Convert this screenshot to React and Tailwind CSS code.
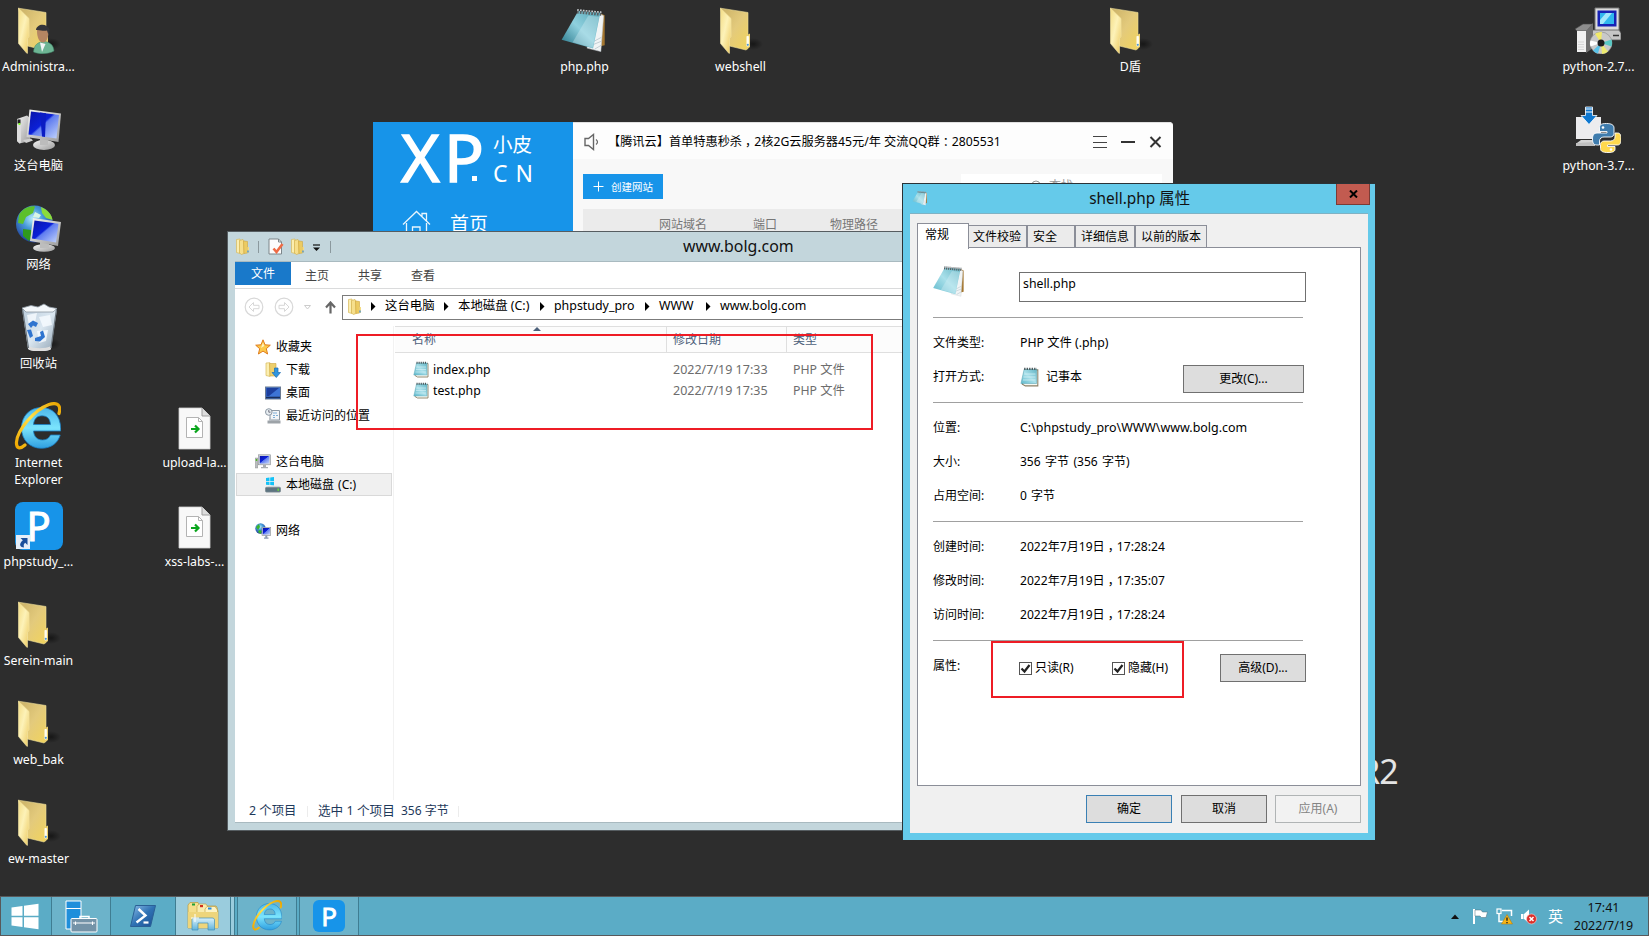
import React from "react";

const Svg = ({ w, h, box, fit, className = "", children }) => (
  <svg width={w} height={h} viewBox={box || `0 0 ${w} ${h}`} preserveAspectRatio={fit} className={`block shrink-0 ${className}`} fill="none">
    {children}
  </svg>
);

const Defs = () => (
  <svg width="0" height="0" className="absolute">
    <defs>
      <linearGradient id="fFront" x1="0" y1="0" x2="1" y2="1">
        <stop offset="0" stopColor="#f3dc84" />
        <stop offset=".45" stopColor="#fdf2b8" />
        <stop offset="1" stopColor="#ecc95f" />
      </linearGradient>
      <linearGradient id="fBack" x1="0" y1="0" x2="1" y2="1">
        <stop offset="0" stopColor="#c9b066" />
        <stop offset=".5" stopColor="#e3ca7c" />
        <stop offset="1" stopColor="#f2d45c" />
      </linearGradient>
      <linearGradient id="scr" x1="0" y1="0" x2="1" y2="1">
        <stop offset="0" stopColor="#0a14a8" />
        <stop offset=".45" stopColor="#0b20d8" />
        <stop offset=".5" stopColor="#5f7cf0" />
        <stop offset="1" stopColor="#c5d6fb" />
      </linearGradient>
      <linearGradient id="metal" x1="0" y1="0" x2="1" y2="1">
        <stop offset="0" stopColor="#f6f6f6" />
        <stop offset="1" stopColor="#9a9a9a" />
      </linearGradient>
      <radialGradient id="globe" cx=".45" cy=".35" r=".7">
        <stop offset="0" stopColor="#b6ecfb" />
        <stop offset=".4" stopColor="#4699d8" />
        <stop offset="1" stopColor="#1a2f8e" />
      </radialGradient>
      <linearGradient id="ieBlue" x1="0" y1="0" x2="0" y2="1">
        <stop offset="0" stopColor="#4db7ea" />
        <stop offset=".5" stopColor="#7be4fd" />
        <stop offset="1" stopColor="#2f9fe0" />
      </linearGradient>
      <linearGradient id="ieGold" x1="0" y1="1" x2="1" y2="0">
        <stop offset="0" stopColor="#f0a800" />
        <stop offset=".5" stopColor="#ffe14a" />
        <stop offset="1" stopColor="#e9a400" />
      </linearGradient>
      <linearGradient id="note" x1="0" y1="1" x2="1" y2="0">
        <stop offset="0" stopColor="#1f7083" />
        <stop offset=".5" stopColor="#8fd0de" />
        <stop offset="1" stopColor="#55a5b5" />
      </linearGradient>
      <linearGradient id="noteLight" x1="0" y1="1" x2="1" y2="0">
        <stop offset="0" stopColor="#5fb8cb" />
        <stop offset=".5" stopColor="#a9e0ea" />
        <stop offset="1" stopColor="#62b3c3" />
      </linearGradient>
      <linearGradient id="bin" x1="0" y1="0" x2="1" y2="1">
        <stop offset="0" stopColor="#b9cbda" />
        <stop offset=".5" stopColor="#dbe7f1" />
        <stop offset="1" stopColor="#8fa2b2" />
      </linearGradient>
      <linearGradient id="ps" x1="0" y1="0" x2="1" y2="1">
        <stop offset="0" stopColor="#8fc0ea" />
        <stop offset=".5" stopColor="#2f72b4" />
        <stop offset="1" stopColor="#1b4f93" />
      </linearGradient>
      <linearGradient id="glass" x1="0" y1="0" x2="0" y2="1">
        <stop offset="0" stopColor="#d9f1fa" />
        <stop offset="1" stopColor="#5fb3dc" />
      </linearGradient>
      <radialGradient id="shade">
        <stop offset="0" stopColor="#000" stopOpacity=".5" />
        <stop offset="1" stopColor="#000" stopOpacity="0" />
      </radialGradient>
    </defs>
  </svg>
);

const FolderShape = ({ tab = true }) => (
  <>
    <ellipse cx="38" cy="38" rx="10" ry="6" fill="url(#shade)" />
    <path d="M5.500 2.200 33 6.500V42.500L31 44 14.500 40Z" fill="url(#fBack)" stroke="#efdf9a" strokeWidth=".6" />
    <path d="M33 28.500 35 27.500V41L33 42.500H31.500V29.500Z" fill="#eacf6e" />
    {tab && (
      <>
        <rect x="31.500" y="30" width="2.400" height="10.500" rx=".8" fill="#fffdf0" />
        <circle cx="32.800" cy="38.800" r="1.100" fill="#4d9ad8" />
      </>
    )}
    <path d="M5.500 2.200 16 12.500V30.500L14.500 32.500V47.300L13.800 47.300 5.500 37.500Z" fill="url(#fFront)" stroke="#f5e6a4" strokeWidth=".6" />
  </>
);

const FolderBig = () => (
  <Svg w={48} h={48}>
    <FolderShape />
  </Svg>
);

const AdminIcon = () => (
  <Svg w={48} h={48}>
    <FolderShape tab={false} />
    <path d="M20.500 46C21 38.500 25 36 31 35.500 37 36 40.500 39 41 45 35 48.500 26 48.500 20.500 46Z" fill="#6db594" stroke="#3f8467" strokeWidth=".5" />
    <path d="M27 36.500 29 46 32.500 38Z" fill="#f2f5f5" />
    <path d="M24 25C24 20 35 20 35.500 26 35.500 31 33.500 36.500 30 36.500 26 36.500 24 31 24 25Z" fill="#b58562" />
    <path d="M23 24C23.500 17.500 34 16.500 36.500 23.500L35.500 29 34 24.500C30 25.500 27 23.500 23 24Z" fill="#33343a" />
  </Svg>
);

const ComputerIcon = () => (
  <Svg w={48} h={48}>
    <ellipse cx="38" cy="36" rx="10" ry="7" fill="url(#shade)" />
    <path d="M4 14 14 10.500 17 13V36L6.500 38.500 4 36Z" fill="url(#metal)" />
    <path d="M4 14 8 14.500V37.500L6.500 38.500 4 36Z" fill="#dcdcdc" />
    <rect x="4.500" y="14.500" width="3" height="4" fill="#222" />
    <rect x="5.500" y="18" width="1.800" height="2" fill="#7aff1a" />
    <path d="M10 35 18 33.500 20 35.500 13 38Z" fill="#cfcfcf" />
    <ellipse cx="31" cy="40" rx="11" ry="5" fill="url(#metal)" />
    <path d="M27 31 35 33V40H27Z" fill="#bcbcbc" />
    <path d="M16.500 4.500 48 8.500 45.500 37 13.500 32Z" fill="url(#metal)" />
    <path d="M18 6.500 46 10 43.500 33.500 15.500 29.500Z" fill="url(#scr)" />
    <path d="M27 7.500 33 8.300 32 32 29 31.600Z" fill="#0a1cc4" />
  </Svg>
);

const NetworkIcon = () => (
  <Svg w={48} h={48}>
    <ellipse cx="38" cy="38" rx="10" ry="6" fill="url(#shade)" />
    <circle cx="21.500" cy="20" r="18.500" fill="url(#globe)" />
    <path d="M6 11C10 4 17 1.500 22 2.500L20 9 13 13 10 20 5 19Z" fill="#5cc02b" />
    <path d="M28 3C35 6 39 11 39.500 16L33 14 29 9Z" fill="#8bdc3a" />
    <path d="M10 25 18 26 20 31 16 37 10 32Z" fill="#2f9a1c" />
    <path d="M22 8 28 11 26 14 20 13Z" fill="#d9f6e5" />
    <ellipse cx="31" cy="44" rx="11" ry="3.800" fill="url(#metal)" />
    <path d="M27 36H36V44H27Z" fill="#bdbdbd" />
    <path d="M20 14 48 18 45 42 17 37Z" fill="url(#metal)" />
    <path d="M21.500 16.500 45.500 19.700 43 38.500 19 34.500Z" fill="url(#scr)" />
  </Svg>
);

const RecycleIcon = () => (
  <Svg w={48} h={48}>
    <ellipse cx="37" cy="41" rx="11" ry="6" fill="url(#shade)" />
    <path d="M9 5.500H44L38 46C33 49 20 49 15 46Z" fill="url(#bin)" />
    <path d="M9 5 18 2.500 25 4 31 1 36 4 44 5.500 40 9H13Z" fill="#f4f8fb" stroke="#8d98a2" strokeWidth=".8" />
    <path d="M14 12 24 10 22 20 16 22ZM26 14 37 12 39 22 30 24ZM24 28 35 27 33 38 26 40Z" fill="#f7fbff" opacity=".8" />
    <path d="M15 21 20 17.500 25 20 23 24 20 22.500 18 25ZM14 27 18 26.500 20 33 17 35ZM22 35 28 33 27 29 30 27.500 32 34 27 38.500 22 38Z" fill="#2f74cf" />
    <path d="M15.500 43C21 46 32 46 38.300 43L37.800 46.500C32 49 20 49 15.700 46.500Z" fill="#dedede" />
    <path d="M9.500 6 15.500 45M43.500 6 38 45" stroke="#6b757d" strokeWidth="1.200" />
  </Svg>
);

const IEIcon = ({ size = 48 }) => (
  <Svg w={size} h={size} box="0 0 48 48">
    <path
      fillRule="evenodd"
      d="M28.500 5.500C39 5.500 47.500 13 47.700 26.500V29H20.500C21 34.500 24 38 29.500 38 33.500 38 36 36.300 37.500 33H47.200C45 41 38 46.300 28.500 46.300 17 46.300 8.500 38 8.500 26 8.500 14 17 5.500 28.500 5.500ZM20.500 22.500H37.500C37 16.500 34 13.800 29 13.800 24 13.800 21 17 20.500 22.500Z"
      fill="url(#ieBlue)"
      stroke="#1a7fc4"
      strokeWidth=".8"
    />
    <path
      d="M12 43C7 47.500 3 46.500 3.500 40 4.500 28 21 8 36 2.500 44 0 48.500 2.500 46 11.500"
      stroke="url(#ieGold)"
      strokeWidth="3.200"
      strokeLinecap="round"
    />
  </Svg>
);

const PhpStudyIcon = () => (
  <div className="relative mt-px flex h-12 w-12 items-center justify-center rounded-lg bg-[#1794e9]">
    <span className="text-[40px] leading-[48px] text-white [-webkit-text-stroke:1px_white]">P</span>
    <Svg w={14} h={14} className="absolute bottom-px left-px">
      <rect width="14" height="14" fill="#e6eef8" />
      <path d="M4.500 3H11.500V10L9.200 7.800C7.500 9 7.500 10.500 8 12.500 4.500 12.500 2 9.500 6.800 5.300Z" fill="#1b4f9b" />
    </Svg>
  </div>
);

const ShortcutFile = () => (
  <Svg w={48} h={48}>
    <path d="M10 3H33L41 11V44H10Z" fill="#f8f8f8" stroke="#cfcfcf" strokeWidth=".8" />
    <path d="M33 3V11H41" fill="#dcdcdc" stroke="#9c9c9c" strokeWidth="1" />
    <path d="M17.500 12.500H29.500L33.500 16.500V32.500H17.500Z" fill="#fff" stroke="#b3b3b3" />
    <path d="M29.500 12.500V16.500H33.500" stroke="#b3b3b3" />
    <path d="M22 24H29M26 20.500 29.500 24 26 27.500" stroke="#0aa51c" strokeWidth="2.200" />
  </Svg>
);

const NotepadTilt = ({ size = 48, light = false }) => (
  <Svg w={size} h={size} box="1.500 0 43.500 49" fit="none">
    <path d="M37 7 42 9.500V40L38 41Z" fill="#a4762f" />
    <path d="M36 7 41 10 38.500 46.500 26 43Z" fill="#f1f4f5" stroke="#c3cbd0" strokeWidth=".5" />
    <path d="M29 38 39 32M28 41 39 36M33 44 39 40" stroke="#b8c5cc" strokeWidth=".8" />
    <path d="M18 5 38 7 31.500 43.500 3 34.500Z" fill={light ? "url(#noteLight)" : "url(#note)"} />
    <path d="M27 10 37 11 31 42.500 13 37Z" fill="#d9f2f7" opacity=".35" />
    <path d="M17 5.500 39 7.800" stroke="#5a5f62" strokeWidth="4.500" strokeDasharray="1.500 1.100" />
    <path d="M17 4 39 6.300" stroke="#c9cdd0" strokeWidth="1.500" strokeDasharray="1.500 1.100" />
  </Svg>
);

const NotepadSmall = ({ w = 16, h = 17 }) => (
  <Svg w={w} h={h} box="0 0 16 17">
    <path d="M4 2.500H15V16H4.500L2 14.500Z" fill="#fbfbf5" stroke="#8b7f65" strokeWidth=".9" />
    <path d="M3.500 2H14V14H.800Z" fill="url(#noteLight)" stroke="#5fa9b8" strokeWidth=".5" />
    <path d="M3.500 6H13M3 8.500H13M2.500 11H13" stroke="#d8f2f6" strokeWidth=".6" />
    <path d="M3.500 1.700H14.200" stroke="#4a5558" strokeWidth="2" strokeDasharray="1.100 1" />
  </Svg>
);

const Python2Icon = () => (
  <Svg w={48} h={48}>
    <path d="M22 2H46V26H22Z" fill="#dcdcdc" stroke="#777" />
    <rect x="24.500" y="4.500" width="19" height="16" fill="#1722b5" />
    <path d="M27 7H41V18H27Z" fill="#2fb7ee" />
    <path d="M33 7H39L30 18H27V14Z" fill="#a2e8fb" />
    <path d="M18 24H46L48 27V34H20Z" fill="#c6c6c6" stroke="#555" strokeWidth=".8" />
    <path d="M40 29.500H46" stroke="#333" strokeWidth="1.500" />
    <path d="M2 23 10 18H20L14 25H4Z" fill="#8d8d8d" stroke="#444" strokeWidth=".6" />
    <path d="M4 25H13V46H4Z" fill="#f1f1f1" />
    <path d="M13 25 20 17V42L13 47Z" fill="#6e6e6e" />
    <path d="M5.500 36H11.500M5.500 38.500H11.500M5.500 41H11.500M5.500 43.500H11.500" stroke="#bbb" strokeDasharray="1 1" />
    <circle cx="28" cy="37" r="11" fill="#c9c9c9" stroke="#888" strokeWidth=".6" />
    <path d="M28 37 22 27.800A11 11 0 0 1 29 26Z" fill="#f1e96a" />
    <path d="M28 37 38.500 33.500A11 11 0 0 1 38.500 40.500Z" fill="#58c8c4" />
    <path d="M28 37 29 48A11 11 0 0 0 35 45.500Z" fill="#eeeb70" />
    <path d="M28 37 17.300 34.500A11 11 0 0 0 17.500 40.500Z" fill="#fff" />
    <path d="M28 37 20 44.500A11 11 0 0 0 25 47.600Z" fill="#5ac2e8" />
    <circle cx="28" cy="37" r="3.500" fill="#1d1d1d" />
  </Svg>
);

const Python3Icon = () => (
  <Svg w={48} h={48}>
    <path d="M3 12H28V34H3Z" fill="#ececee" />
    <path d="M8 35H22L20 38H4Z" fill="#d5d5d5" />
    <path d="M3 38 22 37V41H3Z" fill="#bfbfbf" />
    <path d="M12.500 2H19.500V10.500H24L16 19.500 8 10.500H12.500Z" fill="#0f78d0" stroke="#fff" strokeWidth=".8" />
    <path d="M12 4H20M12 7H20" stroke="#fff" strokeWidth="1.200" />
    <path
      d="M33.500 18.500C27 18.500 26.500 20.500 26.500 23V26.500H34V28H24C21 28 19.500 30 19.500 34 19.500 38.500 21 40 24 40H26.500V36C26.500 33.500 28.500 32 31 32H37.500C39.500 32 41 30.500 41 28.500V23C41 20 38.500 18.500 33.500 18.500Z"
      fill="#3f7cad"
      stroke="#fff"
      strokeWidth=".9"
    />
    <circle cx="30" cy="22.500" r="1.300" fill="#fff" />
    <path
      d="M35 47.500C41 47.500 42 46 42 44V41.500H34.500V40H44.500C47 40 48 38 48 34 48 29.500 47 28 44.500 28H42V32C42 34.500 40 36 37.500 36H31C29 36 27.500 37.500 27.500 39.500V43.500C27.500 46.500 30 47.500 35 47.500Z"
      fill="#ffd94e"
      stroke="#fff"
      strokeWidth=".9"
    />
    <circle cx="38" cy="44.500" r="1.300" fill="#fff" />
  </Svg>
);

const desktopItems = [
  { pos: "left-[-11px] top-[6px]", icon: <AdminIcon />, label: "Administra..." },
  { pos: "left-[-11px] top-[105px]", icon: <ComputerIcon />, label: "这台电脑" },
  { pos: "left-[-11px] top-[204px]", icon: <NetworkIcon />, label: "网络" },
  { pos: "left-[-11px] top-[303px]", icon: <RecycleIcon />, label: "回收站" },
  { pos: "left-[-11px] top-[402px]", icon: <IEIcon />, label: "Internet\nExplorer" },
  { pos: "left-[-11px] top-[501px]", icon: <PhpStudyIcon />, label: "phpstudy_...", centered: true, tight: true },
  { pos: "left-[-11px] top-[600px]", icon: <FolderBig />, label: "Serein-main" },
  { pos: "left-[-11px] top-[699px]", icon: <FolderBig />, label: "web_bak" },
  { pos: "left-[-11px] top-[798px]", icon: <FolderBig />, label: "ew-master" },
  { pos: "left-[145px] top-[405px]", icon: <ShortcutFile />, label: "upload-la...", short: true },
  { pos: "left-[145px] top-[504px]", icon: <ShortcutFile />, label: "xss-labs-...", short: true },
  { pos: "left-[535px] top-[6px]", icon: <NotepadTilt />, label: "php.php", shifted: true },
  { pos: "left-[691px] top-[6px]", icon: <FolderBig />, label: "webshell" },
  { pos: "left-[1081px] top-[6px]", icon: <FolderBig />, label: "D盾" },
  { pos: "left-[1549px] top-[6px]", icon: <Python2Icon />, label: "python-2.7..." },
  { pos: "left-[1549px] top-[105px]", icon: <Python3Icon />, label: "python-3.7..." },
];

const DesktopItem = ({ pos, icon, label, short, centered, tight, shifted }) => (
  <div className={`absolute flex w-[99px] flex-col items-center text-white ${pos}`}>
    <div className={centered ? "" : shifted ? "pr-[2px]" : "pr-1"}>{icon}</div>
    <span className={`text-center text-[12.300px] leading-[17px] whitespace-pre ${short ? "mt-px" : tight ? "mt-[3px]" : "mt-[4px]"}`}>
      {label}
    </span>
  </div>
);

const Comma = () => <span className="inline-block translate-x-[3px] leading-none">，</span>;
const Colon = () => <span className="inline-block translate-x-[3px] leading-none">：</span>;

const XpWindow = () => (
  <div className="absolute top-[122px] left-[373px] flex h-[400px] w-[800px]">
    <div className="flex w-[200px] flex-col bg-[#1794e9] text-white">
      <div className="flex h-[76px] pl-[28px]">
        <div className="flex w-[92px] items-start">
          <span className="w-[43px] text-[66px] leading-[68px] [-webkit-text-stroke:1.500px_white]">X</span>
          <span className="w-[28px] text-[66px] leading-[68px] [-webkit-text-stroke:1.500px_white]">P</span>
          <span className="mt-[54px] h-[5px] w-[5px] bg-white" />
        </div>
        <div className="flex flex-col pt-[11px]">
          <span className="text-[19.500px] leading-[24px]">小皮</span>
          <span className="mt-[4px] text-[23px] leading-[24px] tracking-[8px]">CN</span>
        </div>
      </div>
      <div className="flex pt-[12px] pl-[29px]">
        <Svg w={29} h={26}>
          <path d="M1 14.500 14.500 1.500 28 14.500M4.500 13V25H10.500V17H18V25H24.500V13M20 6.500V3.500H24.500V10.500" stroke="#e9f5fd" strokeWidth="1.300" />
        </Svg>
        <span className="ml-[19px] text-[19px] leading-[28px]">首页</span>
      </div>
    </div>
    <div className="flex w-[600px] flex-col rounded-tr-sm bg-[#f8f8f8]">
      <div className="flex h-[37px] items-center rounded-tr-sm border-t border-[#e0e0e0] bg-[#fdfdfd] pl-[11px]">
        <Svg w={16} h={18} className="mt-[2px]">
          <path d="M1 5.500H4.500L9.500 1.500V16.500L4.500 12.500H1Z" stroke="#666" strokeWidth="1.400" />
          <path d="M12 6.500C14 8 14 10 12 11.500" stroke="#666" strokeWidth="1.200" />
        </Svg>
        <span className="mt-[2px] ml-[8px] w-[485px] text-[12.200px] leading-[18px] whitespace-nowrap text-black">
          【腾讯云】首单特惠秒杀<Comma />2核2G云服务器45元/年 交流QQ群<Colon />2805531
        </span>
        <Svg w={70} h={14} className="mt-px">
          <path d="M0 1.500H14M0 7.500H14M0 12.500H14" stroke="#444" />
          <path d="M28 7H42" stroke="#333" strokeWidth="2" />
          <path d="M57.500 2 67.500 12M67.500 2 57.500 12" stroke="#333" strokeWidth="2" />
        </Svg>
      </div>
      <div className="flex justify-between pt-[15px] pr-[11px] pl-[10px]">
        <div className="flex h-[25px] w-[80px] items-center bg-[#1794e9] pl-[10px] text-white">
          <Svg w={11} h={11}>
            <path d="M5.500 .500V10.500M.500 5.500H10.500" stroke="#fff" />
          </Svg>
          <span className="mt-px ml-[7px] text-[10.500px] leading-[16px]">创建网站</span>
        </div>
        <div className="flex h-[25px] w-[201px] items-center bg-white pb-[2px] pl-[70px] text-[12px] text-[#999]">
          <Svg w={12} h={12}>
            <circle cx="5" cy="5" r="4" stroke="#999" />
          </Svg>
          <span className="ml-[6px]">查找</span>
        </div>
      </div>
      <div className="mt-[10px] ml-[10px] flex h-[32px] bg-[#ebebeb] pt-[7px] pl-[76px] text-[12px] leading-[18px] text-[#777]">
        <span className="w-[94px]">网站域名</span>
        <span className="w-[77px]">端口</span>
        <span>物理路径</span>
      </div>
    </div>
  </div>
);

const FolderSmall = () => (
  <Svg w={15} h={17}>
    <path d="M1.500 1.500 5 1V15.500L1.500 14.500Z" fill="#fbeeb0" stroke="#d7b95a" strokeWidth=".7" />
    <path d="M4.500 2.500 8 1.500 9 3V15.500L6.500 16.500 4.500 15Z" fill="#f6df8c" stroke="#d0ad48" strokeWidth=".6" />
    <path d="M8.500 3 12.500 3.500V15L9 15.500Z" fill="#eccb62" stroke="#cfa63f" strokeWidth=".6" />
    <path d="M12.500 9H14V15H12.500Z" fill="#f4dc84" />
    <rect x="12.200" y="12.500" width="1.600" height="2" fill="#5a9ad0" />
  </Svg>
);

const Crumb = ({ w, children }) => (
  <div className={`flex items-center ${w}`}>
    <span className="text-[12.400px] leading-[18px] whitespace-nowrap">{children}</span>
  </div>
);

const Arrow = () => (
  <Svg w={14} h={9}>
    <path d="M0 0 4.500 4.500 0 9Z" fill="#000" />
  </Svg>
);

const StarIcon = () => (
  <Svg w={16} h={16}>
    <path d="M8 .800 10 5.800 15.300 6.200 11.300 9.700 12.600 15 8 12.100 3.400 15 4.700 9.700 .700 6.200 6 5.800Z" fill="#fcc94a" stroke="#e07c1c" strokeWidth="1" />
    <path d="M8 3.500 9.200 7 6 9Z" fill="#fff2c0" />
  </Svg>
);

const DownloadIcon = () => (
  <Svg w={16} h={16}>
    <path d="M1 1 5 .700V14.500L1 13.500Z" fill="#fbeeb0" stroke="#d7b95a" strokeWidth=".7" />
    <path d="M4.500 1.500H11V14H5Z" fill="#edcf6c" stroke="#cfa63f" strokeWidth=".6" />
    <path d="M9.500 6H13V10.500H15.500L11.300 15.500 7 10.500H9.500Z" fill="#2f95e0" stroke="#1d6cb0" strokeWidth=".7" />
  </Svg>
);

const DesktopSmall = () => (
  <Svg w={16} h={14}>
    <rect x=".500" y="1" width="15" height="12" fill="#3d74d6" stroke="#6a7a92" />
    <path d="M1.500 2H14L4 10H1.500Z" fill="#1d3f9e" />
    <path d="M1 11.500H15" stroke="#1a2f5c" strokeWidth="1.600" />
  </Svg>
);

const RecentIcon = () => (
  <Svg w={16} h={16}>
    <path d="M5 2.500H14.500V12H5Z" fill="#f2f5f8" stroke="#8c98a4" />
    <path d="M8 5H12M8 7.500H10M11 7.500H13M8 9.500H10" stroke="#7fb0d8" strokeWidth="1.200" />
    <path d="M2.500 12.500H15.500V15.500H2.500Z" fill="#9da3a8" />
    <circle cx="3.800" cy="4" r="3.300" fill="#e8eef2" stroke="#8c98a4" />
    <path d="M3.800 2V4.200H5.500" stroke="#556" strokeWidth=".8" />
    <path d="M4 9.500H6V13H4Z" fill="#b8bec4" />
  </Svg>
);

const PcSmall = () => (
  <Svg w={16} h={15}>
    <rect x=".300" y="4" width="2.500" height="10" fill="#b9bdc0" stroke="#888" strokeWidth=".4" />
    <rect x=".800" y="5" width="1.400" height="2" fill="#4dbb20" />
    <rect x="3.500" y=".800" width="12" height="10" fill="#d0d4d8" stroke="#8a8f94" strokeWidth=".6" />
    <rect x="4.800" y="2" width="9.500" height="7.500" fill="url(#scr)" />
    <path d="M8 11H11V13H13V14.300H6V13H8Z" fill="#a9adb0" />
  </Svg>
);

const DriveIcon = () => (
  <Svg w={16} h={16}>
    <path d="M1 1 4.500 .600V4H1ZM5.200 .500 9 0V4H5.200ZM1 4.700H4.500V8L1 7.700ZM5.200 4.700H9V8.500L5.200 8Z" fill="#12c1f7" />
    <path d="M1.500 10.500 3.500 8.800H13.500L15.500 10.500Z" fill="#dfe3e4" />
    <rect x=".500" y="10.300" width="15" height="4.800" rx="1" fill="#5d7480" stroke="#7b8a92" strokeWidth=".8" />
    <rect x="12.500" y="11.500" width="1.400" height="2.400" fill="#6be03a" />
  </Svg>
);

const NetSmall = () => (
  <Svg w={16} h={16}>
    <circle cx="5.500" cy="5.500" r="5.200" fill="url(#globe)" />
    <path d="M1 4 4 1 5 4 3 7ZM4 7 7 8 5.500 11 3 9Z" fill="#39b52c" />
    <rect x="7" y="4.300" width="8.700" height="8.300" fill="#dde1e5" stroke="#8a8f94" strokeWidth=".6" />
    <rect x="7.800" y="5" width="7.200" height="6.500" fill="url(#scr)" />
    <path d="M10.300 12.500H12.300V14.500H13.500V15.700H9V14.500H10.300Z" fill="#8c99b0" />
  </Svg>
);

const SideRow = ({ icon, children, indent = false, selected = false }) => (
  <div
    className={`flex h-[23px] shrink-0 items-center border ${indent ? "pl-[28px]" : "pl-[18px]"} ${
      selected ? "border-[#d9d9d9] bg-[#f0f0f0]" : "border-transparent"
    }`}
  >
    <div className="flex w-[21px] justify-start">{icon}</div>
    <span className="text-[12px] leading-[18px] [word-spacing:1px] whitespace-nowrap text-black">{children}</span>
  </div>
);

const FileRow = ({ name, date }) => (
  <div className="flex h-[21px] items-center pl-[18px] text-[12.300px] leading-[18px] whitespace-nowrap text-[#6d6d6d]">
    <NotepadSmall />
    <span className="ml-[4px] w-[240px] text-black">{name}</span>
    <span className="w-[120px] text-[12.500px]">{date}</span>
    <span>PHP 文件</span>
  </div>
);

const NavCircle = ({ flip }) => (
  <Svg w={20} h={20} className={flip ? "ml-[10px] -scale-x-100" : ""}>
    <circle cx="10" cy="10" r="8.800" stroke="#d8d8d8" strokeWidth="1.200" />
    <path d="M5 10 9.500 5.500V8.300H15V11.700H9.500V14.500Z" stroke="#d8d8d8" strokeWidth="1" />
  </Svg>
);

const Explorer = () => (
  <div className="absolute top-[231px] left-[227px] flex h-[600px] w-[720px] flex-col border border-[#565d61] bg-[#c3d6dc] pr-[7px] pb-[7px] pl-[7px]">
    <div className="flex h-[29px] shrink-0 items-center">
      <FolderSmall />
      <div className="ml-[8px] h-[12px] w-px bg-[#8b999e]" />
      <Svg w={16} h={17} className="ml-[9px]">
        <path d="M1 1H10.500L13.500 4V16H1Z" fill="#fcfcfc" stroke="#7d868a" />
        <path d="M10.500 1V4H13.500" stroke="#7d868a" />
        <path d="M5.500 10.500 8.500 14 14.500 6" stroke="#ee6b45" strokeWidth="2.600" />
      </Svg>
      <div className="ml-[6px]">
        <FolderSmall />
      </div>
      <Svg w={8} h={8} className="mt-[2px] ml-[8px]">
        <path d="M0 1H7" stroke="#111" strokeWidth="1.200" />
        <path d="M0 3.500H7L3.500 7Z" fill="#111" />
      </Svg>
      <div className="ml-[9px] h-[12px] w-px bg-[#8b999e]" />
      <span className="-mt-[2px] ml-[352px] text-[15.900px] leading-[22px] text-[#111]">www.bolg.com</span>
    </div>
    <div className="flex min-h-0 grow flex-col border-t border-b border-t-[#a9bac0] border-b-[#a9bac0] bg-white">
      <div className="flex h-[27px] shrink-0 border-b border-[#dadbdc] text-[12px] leading-[18px] text-[#444]">
        <div className="flex h-[23px] w-[56px] items-center justify-center bg-[#1979ca] text-white">文件</div>
        <span className="mt-[5px] ml-[14px] w-[53px]">主页</span>
        <span className="mt-[5px] w-[53px]">共享</span>
        <span className="mt-[5px]">查看</span>
      </div>
      <div className="flex h-[37px] shrink-0 items-center pb-px pl-[9px]">
        <NavCircle />
        <NavCircle flip />
        <Svg w={8} h={5} className="ml-[10px]">
          <path d="M.500 .500H6.500L3.500 4Z" stroke="#ccc" />
        </Svg>
        <Svg w={11} h={13} className="ml-[13px]">
          <path d="M5.500 12.500V2M1 6.500 5.500 1.500 10 6.500" stroke="#666" strokeWidth="2.200" />
        </Svg>
        <div className="ml-[6px] flex h-[25px] grow items-center border border-r-0 border-[#7b7b7b] pb-[2px] pl-[4px]">
          <FolderSmall />
          <div className="w-[9px]" />
          <Arrow />
          <Crumb w="w-[59px]">这台电脑</Crumb>
          <Arrow />
          <Crumb w="w-[82px]">本地磁盘 (C:)</Crumb>
          <Arrow />
          <Crumb w="w-[91px]">phpstudy_pro</Crumb>
          <Arrow />
          <Crumb w="w-[47px]">WWW</Crumb>
          <Arrow />
          <Crumb w="w-[90px]">www.bolg.com</Crumb>
        </div>
      </div>
      <div className="flex min-h-0 grow">
        <div className="flex w-[159px] shrink-0 flex-col border-r border-[#f2f2f2] pt-[9px] pr-px pl-px">
          <SideRow icon={<StarIcon />}>收藏夹</SideRow>
          <SideRow indent icon={<DownloadIcon />}>下载</SideRow>
          <SideRow indent icon={<DesktopSmall />}>桌面</SideRow>
          <SideRow indent icon={<RecentIcon />}>最近访问的位置</SideRow>
          <div className="h-[23px] shrink-0" />
          <SideRow icon={<PcSmall />}>这台电脑</SideRow>
          <SideRow indent selected icon={<DriveIcon />}>本地磁盘 (C:)</SideRow>
          <div className="h-[23px] shrink-0" />
          <SideRow icon={<NetSmall />}>网络</SideRow>
        </div>
        <div className="flex grow flex-col pl-px">
          <div className="relative flex h-[27px] border-t border-b border-[#dfdfdf] bg-[#fcfcfc] text-[12px] leading-[18px] text-[#4c607a]">
            <Svg w={8} h={4} className="absolute top-0 left-[138px]">
              <path d="M0 4 4 0 8 4Z" fill="#4c607a" />
            </Svg>
            <span className="w-[272px] border-r border-[#dfdfdf] pt-[4px] pl-[17px]">名称</span>
            <span className="w-[120px] border-r border-[#dfdfdf] pt-[4px] pl-[6px]">修改日期</span>
            <span className="pt-[4px] pl-[6px]">类型</span>
          </div>
          <div className="pt-[6px]">
            <FileRow name="index.php" date="2022/7/19 17:33" />
            <FileRow name="test.php" date="2022/7/19 17:35" />
          </div>
        </div>
      </div>
      <div className="flex h-[22px] shrink-0 items-start pt-[2px] pl-[14px] text-[12.400px] leading-[18px] whitespace-nowrap text-[#1e395b]">
        <span className="w-[58px]">2 个项目</span>
        <div className="mt-[4px] h-[11px] w-px bg-[#ececec]" />
        <span className="ml-[10px] w-[83px] text-[12.600px]">选中 1 个项目</span>
        <span className="w-[57px] text-[12px]">356 字节</span>
        <div className="mt-[4px] h-[11px] w-px bg-[#ececec]" />
      </div>
    </div>
  </div>
);

const Field = ({ label, children, h = "h-[34px]" }) => (
  <div className={`flex items-center ${h}`}>
    <span className="w-[87px] shrink-0">{label}</span>
    {children}
  </div>
);

const Rule = () => <div className="h-px w-[370px] shrink-0 bg-[#a0a0a0]" />;

const Button = ({ size = "w-[86px]", tone = "border-[#707070] bg-[#dddddd] text-black", children }) => (
  <div className={`flex h-[28px] shrink-0 items-center justify-center border ${size} ${tone}`}>{children}</div>
);

const Checkbox = ({ children }) => (
  <div className="flex w-[93px] items-center">
    <div className="flex h-[13px] w-[13px] items-center justify-center border border-[#555] bg-white">
      <Svg w={11} h={11}>
        <path d="M1.500 5.500 4.500 8.500 9.500 2" stroke="#222" strokeWidth="2.200" />
      </Svg>
    </div>
    <span className="ml-[3px]">{children}</span>
  </div>
);

const Tab = ({ w, children }) => (
  <div className={`flex h-[22px] items-center border border-b-0 border-[#8b8e98] bg-[#ebebeb] ${w}`}>{children}</div>
);

const DateText = ({ day, time }) => (
  <span className="text-[12.100px]">
    {day}
    <Comma />
    {time}
  </span>
);

const Dialog = () => (
  <div className="absolute top-[183px] left-[902px] flex h-[657px] w-[473px] flex-col border-t border-l border-[#2b3236] bg-[#65caea] pr-[7px] pb-[7px] pl-[7px] text-[12px] leading-[18px] whitespace-nowrap text-black">
    <div className="-mr-[2px] flex h-[29px] shrink-0">
      <div className="mt-[6px] ml-[2px] w-[178px]">
        <NotepadTilt size={16} light />
      </div>
      <span className="mt-[4px] w-[248px] text-[15.400px] leading-[22px] text-[#111]">shell.php 属性</span>
      <div className="flex h-[21px] w-[34px] items-center justify-center border border-t-0 border-[#7b3b35] bg-[#c25b50]">
        <Svg w={9} h={8}>
          <path d="M1 .500 8 7.500M8 .500 1 7.500" stroke="#000" strokeWidth="2" />
        </Svg>
      </div>
    </div>
    <div className="flex grow flex-col border-t border-[#7fb2c4] bg-[#f0f0f0] px-[7px] pt-[9px]">
      <div className="flex h-[24px] items-end">
        <div className="z-10 -mb-[2px] flex h-[26px] w-[52px] items-center border border-b-0 border-[#8b8e98] bg-white pb-[4px] pl-[7px]">常规</div>
        <Tab w="w-[58px] border-l-0 pl-[4px]">文件校验</Tab>
        <Tab w="w-[48px] pl-[5px]">安全</Tab>
        <Tab w="w-[60px] pl-[5px]">详细信息</Tab>
        <Tab w="w-[72px] pl-[5px]">以前的版本</Tab>
      </div>
      <div className="flex h-[539px] shrink-0 flex-col border border-[#8b8e98] bg-white pt-[16px] pl-[15px]">
        <div className="flex h-[53px] shrink-0">
          <div className="-ml-px w-[87px]">
            <NotepadTilt size={34} light />
          </div>
          <div className="mt-[8px] h-[30px] w-[287px] border border-[#707070] pt-[2px] pl-[3px] text-[12.300px]">shell.php</div>
        </div>
        <Rule />
        <div className="flex h-[84px] shrink-0 flex-col pt-[8px]">
          <Field label="文件类型:">
            <span className="text-[12.300px]">PHP 文件 (.php)</span>
          </Field>
          <Field label="打开方式:">
            <NotepadSmall w={19} h={22} />
            <span className="ml-[7px] w-[137px]">记事本</span>
            <div className="mt-[4px]">
              <Button size="w-[121px]">更改(C)...</Button>
            </div>
          </Field>
        </div>
        <Rule />
        <div className="flex h-[118px] shrink-0 flex-col pt-[8px]">
          <Field label="位置:">
            <span className="text-[12.450px]">C:\phpstudy_pro\WWW\www.bolg.com</span>
          </Field>
          <Field label="大小:">
            <span className="[word-spacing:1.300px]">356 字节 (356 字节)</span>
          </Field>
          <Field label="占用空间:">
            <span className="[word-spacing:1px]">0 字节</span>
          </Field>
        </div>
        <Rule />
        <div className="flex h-[118px] shrink-0 flex-col pt-[8px]">
          <Field label="创建时间:">
            <DateText day="2022年7月19日" time="17:28:24" />
          </Field>
          <Field label="修改时间:">
            <DateText day="2022年7月19日" time="17:35:07" />
          </Field>
          <Field label="访问时间:">
            <DateText day="2022年7月19日" time="17:28:24" />
          </Field>
        </div>
        <Rule />
        <div className="flex items-start pt-[13px]">
          <span className="mt-[3px] w-[86px]">属性:</span>
          <div className="mt-[5px] flex w-[201px]">
            <Checkbox>只读(R)</Checkbox>
            <Checkbox>隐藏(H)</Checkbox>
          </div>
          <Button>高级(D)...</Button>
        </div>
      </div>
      <div className="flex justify-end pt-[9px]">
        <Button tone="border-[#3a80b4] bg-[#dddddd] text-black">确定</Button>
        <div className="w-[9px]" />
        <Button>取消</Button>
        <div className="w-[8px]" />
        <Button tone="border-[#b0b4b5] bg-[#f2f2f2] text-[#848484]">应用(A)</Button>
      </div>
    </div>
  </div>
);

const TaskCell = ({ w, tone = "bg-[#6cb3ca]", children }) => (
  <div className={`flex h-full shrink-0 items-center justify-center border-r border-[#3f7d92] ${w} ${tone}`}>{children}</div>
);

const Taskbar = () => (
  <div className="absolute top-[896px] left-0 flex h-[40px] w-[1649px] justify-between border border-[#58595b] bg-[#5bacc6]">
    <div className="flex">
      <TaskCell w="w-[51px] pr-[2px]" tone="bg-[#5bacc6]">
        <Svg w={28} h={27}>
          <path d="M.500 4.500 11.500 3V12.800H.500ZM13 2.800 27.500 .800V12.800H13ZM.500 14.200H11.500V24L.500 22.500ZM13 14.200H27.500V26.200L13 24.200Z" fill="#fff" />
        </Svg>
      </TaskCell>
      <TaskCell w="w-[59px]">
        <Svg w={33} h={33}>
          <path d="M1 1H16V29H1Z" fill="#1f8fdb" stroke="#fff" />
          <path d="M1 8.500H16" stroke="#fff" />
          <path d="M15 18V16.500H24V18" stroke="#fff" strokeWidth="1.500" />
          <rect x="6" y="18.500" width="26" height="13.500" rx="1" fill="#7493a8" stroke="#fff" />
          <path d="M8 23H30M10.500 21.500V25M27.500 21.500V25" stroke="#fff" strokeWidth="1.100" />
        </Svg>
      </TaskCell>
      <TaskCell w="w-[65px]" tone="bg-[#5bacc6]">
        <Svg w={28} h={24}>
          <path d="M6.500 1.500H26.500L21.500 22.500H1.500Z" fill="url(#ps)" stroke="#2a6096" />
          <path d="M9.500 5 16.500 11.500 7.500 18.500" stroke="#fff" strokeWidth="2.400" />
          <path d="M14.500 18.500H19.500" stroke="#fff" strokeWidth="2.200" />
        </Svg>
      </TaskCell>
      <TaskCell w="w-[55px]" tone="bg-[#9accdd]">
        <Svg w={34} h={30}>
          <path d="M2 4 4 1.500H12L14 5H30L32 10V27H2Z" fill="#f4df8c" stroke="#b99a3c" strokeWidth=".7" />
          <path d="M11 5.500 13 3H20L22 6H31V12H11Z" fill="#f9ecae" stroke="#b99a3c" strokeWidth=".6" />
          <path d="M19 8 21 5.500H29L31.500 9V13H19Z" fill="#fcf3c4" stroke="#b99a3c" strokeWidth=".6" />
          <rect x="6" y="2.500" width="3" height="2" fill="#1fa038" />
          <rect x="14" y="4" width="3" height="2.200" fill="#d2301e" />
          <rect x="22" y="6.500" width="3.500" height="2" fill="#2a8de0" />
          <path d="M2 11H32V27H2Z" fill="#eed57b" />
          <path d="M6 29V19C6 17.500 7 17 8 17H26C27.500 17 28.500 17.500 28.500 19V29H22V22H12V29Z" fill="url(#glass)" stroke="#3f8fb8" strokeWidth=".7" />
          <path d="M9 13V21M5 17H13" stroke="#fff" />
        </Svg>
      </TaskCell>
      <TaskCell w="w-[4px]" tone="bg-[#9accdd]" />
      <TaskCell w="w-[3px]" tone="bg-[#5bacc6]" />
      <TaskCell w="w-[59px] pr-px pb-px">
        <IEIcon size={31} />
      </TaskCell>
      <TaskCell w="w-[3px]" tone="bg-[#5bacc6]" />
      <TaskCell w="w-[59px]">
        <div className="flex h-8 w-8 items-center justify-center rounded-md bg-[#1794e9]">
          <span className="text-[26px] leading-[32px] text-white [-webkit-text-stroke:0.800px_white]">P</span>
        </div>
      </TaskCell>
    </div>
    <div className="flex items-center text-[12.500px] text-[#111]">
      <Svg w={8} h={5}>
        <path d="M0 5 4 .500 8 5Z" fill="#111" />
      </Svg>
      <Svg w={17} h={17} className="ml-[13px]">
        <path d="M2 1V16" stroke="#fff" strokeWidth="2" />
        <path d="M3 2H9L10.500 4H15.500L14 9.500H9.500L8 8H3Z" fill="#fff" stroke="#4a6d7a" strokeWidth=".5" />
      </Svg>
      <Svg w={18} h={17} className="ml-[7px]">
        <path d="M6 2.500H15.500V8M3 5.500V13.500H8" stroke="#fff" strokeWidth="1.500" />
        <rect x="1" y="1" width="4" height="4.500" fill="#5bacc6" stroke="#fff" strokeWidth="1.200" />
        <path d="M11 6.500 16.500 16H5.500Z" fill="#f7b516" stroke="#a87408" strokeWidth=".5" />
        <path d="M11 9.500V12.800M11 14V15.200" stroke="#222" strokeWidth="1.400" />
      </Svg>
      <Svg w={18} h={17} className="ml-[6px]">
        <path d="M1 6H3.500V11H1Z" fill="#fff" />
        <path d="M4 6 9 1.500V15L4 11Z" fill="#fff" />
        <circle cx="11.500" cy="11" r="5" fill="#dc2f2a" stroke="#f6d6d4" strokeWidth=".6" />
        <path d="M9.500 9 13.500 13M13.500 9 9.500 13" stroke="#fff" strokeWidth="1.500" />
      </Svg>
      <span className="ml-[10px] text-[15px] leading-[20px] text-white">英</span>
      <div className="mt-px ml-[3px] w-[75px] text-center leading-[18px]">
        <div>17:41</div>
        <div>2022/7/19</div>
      </div>
      <div className="w-[7px]" />
    </div>
  </div>
);

export default function App() {
  return (
    <div className="relative h-[936px] w-[1649px] overflow-hidden bg-[#2d2d2d] font-['Noto_Sans','Noto_Sans_CJK_SC',sans-serif]">
      <Defs />
      {desktopItems.map((item) => (
        <DesktopItem key={item.label} {...item} />
      ))}
      <span className="absolute top-[749px] left-[1359px] text-[34px] leading-[44px] tracking-[-1px] text-[#e4e4e4]">R2</span>
      <XpWindow />
      <Explorer />
      <Dialog />
      <div className="absolute top-[334px] left-[356px] h-[96px] w-[517px] border-2 border-[#ee1c25]" />
      <div className="absolute top-[641px] left-[991px] h-[57px] w-[193px] border-2 border-[#ee1c25]" />
      <Taskbar />
    </div>
  );
}
